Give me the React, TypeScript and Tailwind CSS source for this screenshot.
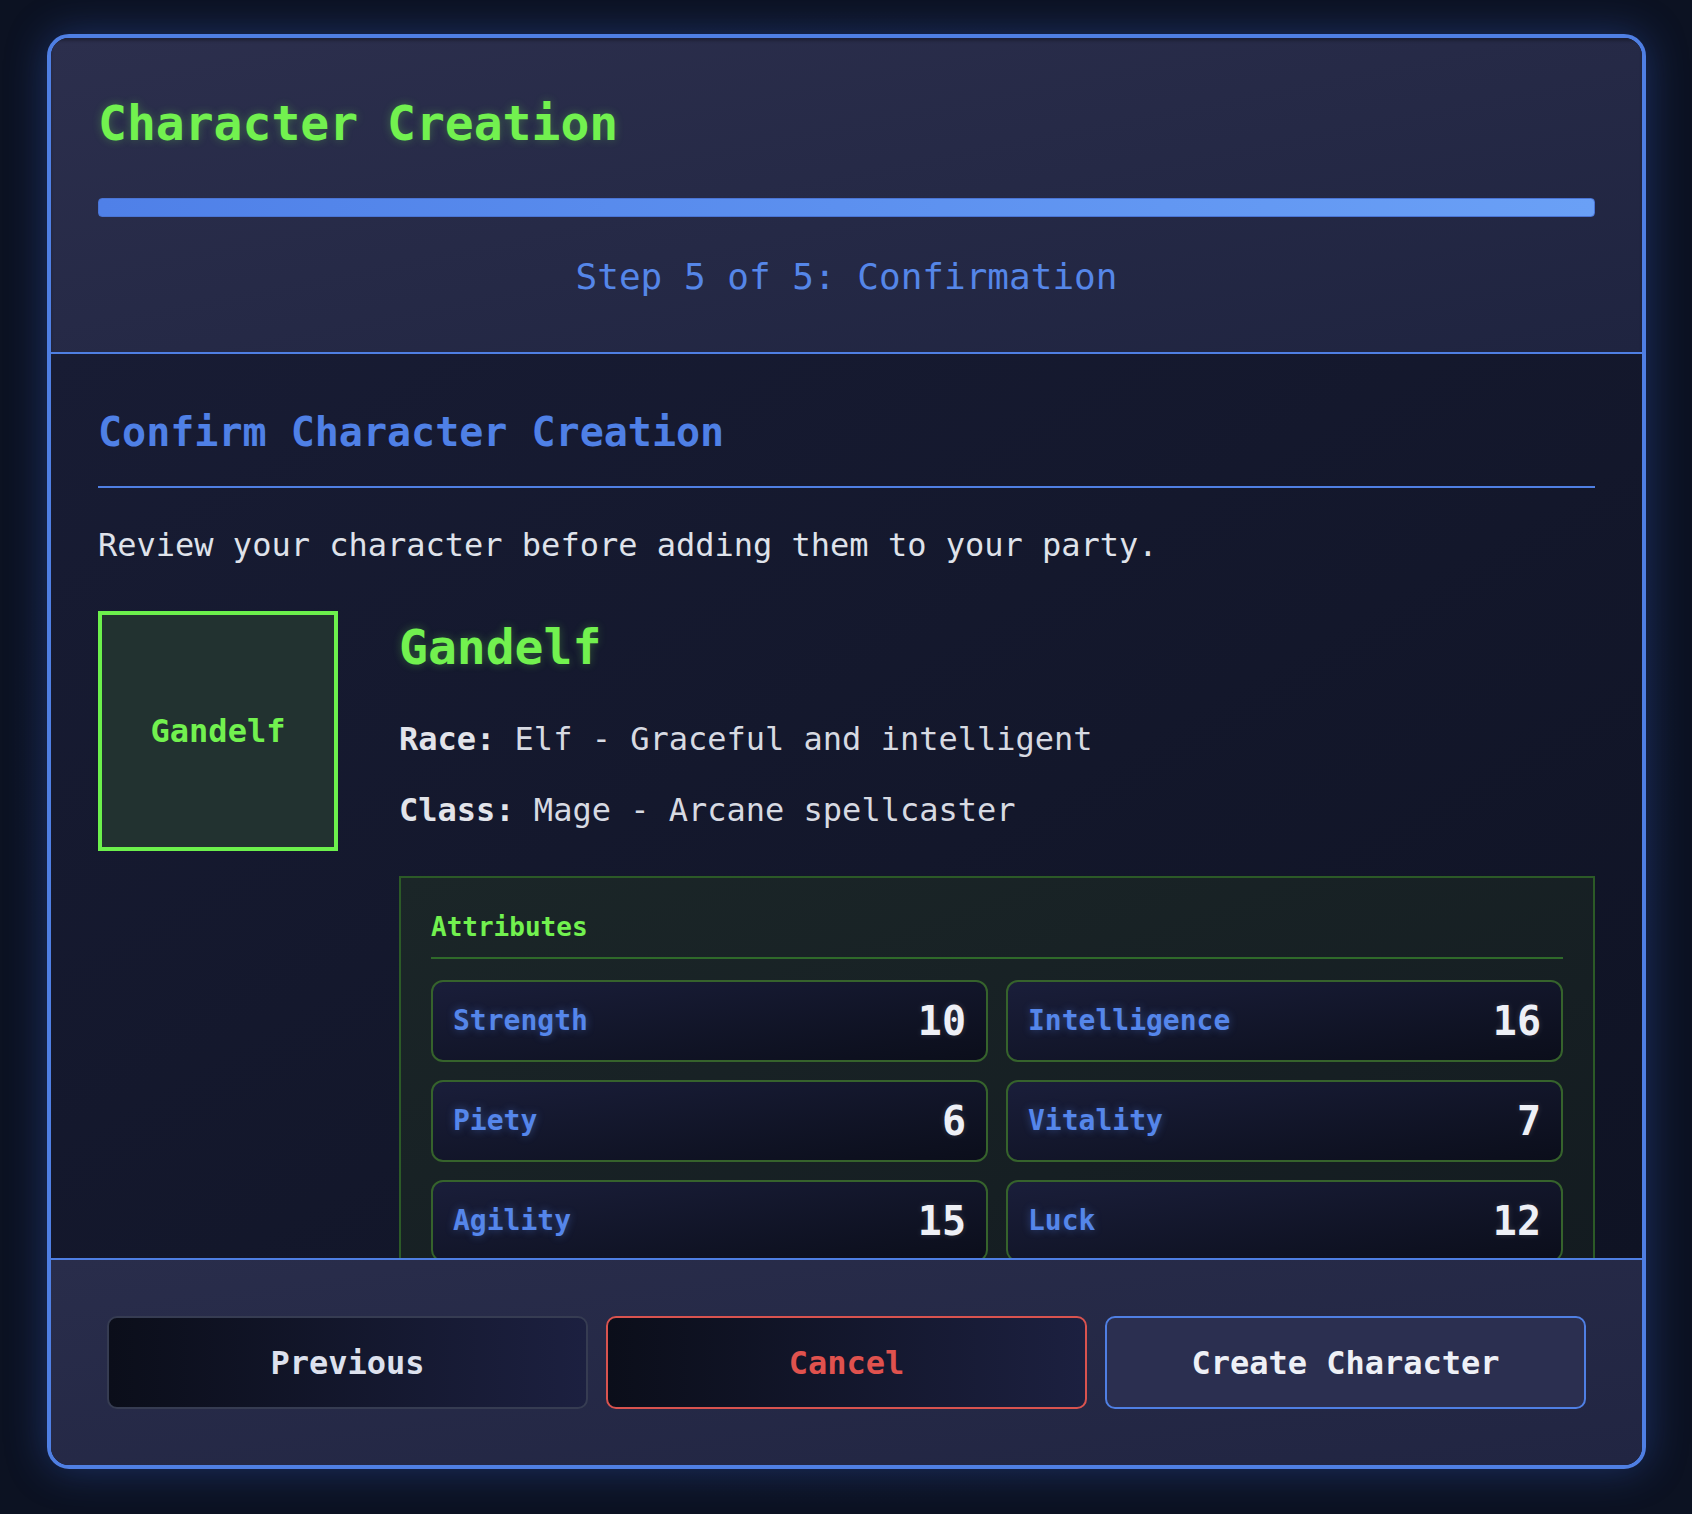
import React from 'react';

interface Attribute {
  name: string;
  value: number;
}

const attributes: Attribute[] = [
  { name: 'Strength', value: 10 },
  { name: 'Intelligence', value: 16 },
  { name: 'Piety', value: 6 },
  { name: 'Vitality', value: 7 },
  { name: 'Agility', value: 15 },
  { name: 'Luck', value: 12 },
];

const AttributeCell: React.FC<{ attr: Attribute }> = ({ attr }) => (
  <div className="flex h-[82px] items-center justify-between rounded-[12px] border-2 border-[#36632c] bg-gradient-to-br from-[#1a1e3a] to-[#0b0e1b] px-[20px]">
    <span className="text-[28px] font-bold leading-[42px] text-[#5586ea] [text-shadow:0_0_8px_rgba(85,134,234,0.45)]">
      {attr.name}
    </span>
    <span className="text-[40px] font-bold leading-[60px] text-[#eef0f6] [text-shadow:0_0_6px_rgba(255,255,255,0.15)]">
      {attr.value}
    </span>
  </div>
);

const App: React.FC = () => {
  return (
    <div className="min-h-screen bg-[#0c1222] bg-[radial-gradient(ellipse_at_center,#121a30_0%,#0c1222_70%)] pb-[45px] pl-[47px] pr-[46px] pt-[34px] [font-family:'DejaVu_Sans_Mono',monospace]">
      <div className="flex h-[1435px] flex-col overflow-hidden rounded-[22px] border-4 border-[#4f7fe3] shadow-[0_0_40px_rgba(60,110,230,0.35)]">
        {/* header */}
        <div className="border-b-2 border-[#4f7fe3] bg-gradient-to-br from-[#2c2f4d] to-[#1f2440] px-[47px] pb-[48px] pt-[49px] shadow-[inset_0_3px_3px_rgba(0,0,0,0.25)]">
          <h1 className="text-[48px] font-bold leading-[72px] text-[#72f14f] [text-shadow:0_0_10px_rgba(114,241,79,0.3)]">
            Character Creation
          </h1>
          <div className="mt-[39px] h-[19px] w-full rounded-[4px] border border-[#4a74d4] bg-gradient-to-r from-[#4f80e8] to-[#6aa0f6]" />
          <p className="mt-[33px] text-center text-[36px] leading-[54px] text-[#5586e8]">
            Step 5 of 5: Confirmation
          </p>
        </div>

        {/* body */}
        <div className="min-h-0 flex-1 overflow-hidden bg-gradient-to-br from-[#181c34] to-[#0f1324] px-[47px] pt-[48px]">
          <h2 className="border-b-2 border-[#4f7fe3] pb-[24px] text-[40px] font-bold leading-[60px] text-[#4f80e6]">
            Confirm Character Creation
          </h2>
          <p className="mt-[33px] text-[32px] leading-[48px] text-[#dfe2ea]">
            Review your character before adding them to your party.
          </p>

          <div className="mt-[42px] flex gap-[61px]">
            <div className="flex h-[240px] w-[240px] shrink-0 items-center justify-center border-4 border-[#6cf04c] bg-[#223230]">
              <span className="text-[32px] font-bold leading-[48px] text-[#72f14f]">Gandelf</span>
            </div>

            <div className="min-w-0 flex-1">
              <h3 className="text-[48px] font-bold leading-[72px] text-[#72f14f] [text-shadow:0_0_10px_rgba(114,241,79,0.3)]">
                Gandelf
              </h3>
              <p className="mt-[32px] text-[32px] leading-[48px] text-[#d7dae2]">
                <span className="font-bold text-[#e2e4ea]">Race:</span> Elf - Graceful and intelligent
              </p>
              <p className="mt-[23px] text-[32px] leading-[48px] text-[#d7dae2]">
                <span className="font-bold text-[#e2e4ea]">Class:</span> Mage - Arcane spellcaster
              </p>

              <div className="mt-[42px] border-2 border-[#2c5a27] bg-gradient-to-br from-[#1b2628] to-[#131b20] p-[30px]">
                <h4 className="border-b-2 border-[#2f6a2a] pb-[10px] text-[26px] font-bold leading-[39px] text-[#72f14f]">
                  Attributes
                </h4>
                <div className="mt-[21px] grid grid-cols-2 gap-[18px]">
                  {attributes.map((attr) => (
                    <AttributeCell key={attr.name} attr={attr} />
                  ))}
                </div>
              </div>
            </div>
          </div>
        </div>

        {/* footer */}
        <div className="flex gap-[18px] border-t-2 border-[#4f7fe3] bg-gradient-to-br from-[#292d4b] to-[#212542] p-[56px]">
          <button className="h-[93px] flex-1 rounded-[10px] border-2 border-[#363c52] bg-gradient-to-r from-[#0b0e1a] to-[#1c2040] text-[32px] font-bold text-[#dde1ee]">
            Previous
          </button>
          <button className="h-[93px] flex-1 rounded-[10px] border-2 border-[#d9534f] bg-gradient-to-r from-[#0b0e1a] to-[#1c2040] text-[32px] font-bold text-[#e0524e]">
            Cancel
          </button>
          <button className="h-[93px] flex-1 rounded-[10px] border-2 border-[#4f7fe3] bg-[#2b2f50] text-[32px] font-bold text-[#eef0f6]">
            Create Character
          </button>
        </div>
      </div>
    </div>
  );
};

export default App;
